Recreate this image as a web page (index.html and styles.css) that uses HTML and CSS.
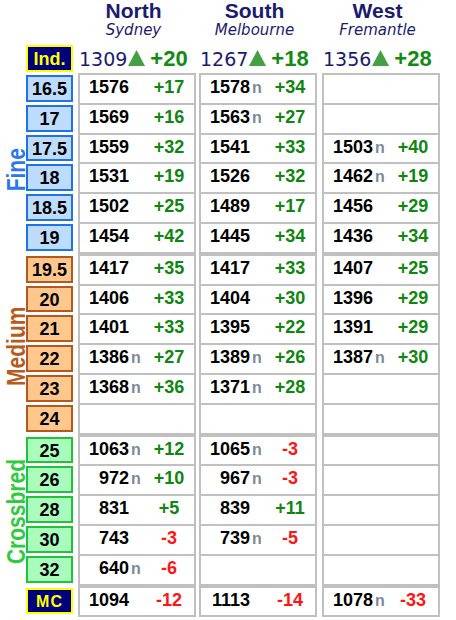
FILE: index.html
```html
<!DOCTYPE html>
<html>
<head>
<meta charset="utf-8">
<link rel="stylesheet" href="styles.css">
</head>
<body>
<div class="board">
  <div class="side">
    <div class="side-top"></div>
    <div class="lsec six fine-sec"><span class="lab fine">Fine</span></div>
    <div class="lsec six med-sec"><span class="lab medium">Medium</span></div>
    <div class="lsec five cross-sec"><span class="lab cross">Crossbred</span></div>
  </div>

  <div class="grades">
    <div class="g-head"></div>
    <div class="g-idx"><div class="gbox dark">Ind.</div></div>
    <div class="gsec">
      <div class="grow"><div class="gbox blue">16.5</div></div>
      <div class="grow"><div class="gbox blue">17</div></div>
      <div class="grow"><div class="gbox blue">17.5</div></div>
      <div class="grow"><div class="gbox blue">18</div></div>
      <div class="grow"><div class="gbox blue">18.5</div></div>
      <div class="grow"><div class="gbox blue">19</div></div>
    </div>
    <div class="gsec">
      <div class="grow"><div class="gbox orange">19.5</div></div>
      <div class="grow"><div class="gbox orange">20</div></div>
      <div class="grow"><div class="gbox orange">21</div></div>
      <div class="grow"><div class="gbox orange">22</div></div>
      <div class="grow"><div class="gbox orange">23</div></div>
      <div class="grow"><div class="gbox orange">24</div></div>
    </div>
    <div class="gsec">
      <div class="grow"><div class="gbox green">25</div></div>
      <div class="grow"><div class="gbox green">26</div></div>
      <div class="grow"><div class="gbox green">28</div></div>
      <div class="grow"><div class="gbox green">30</div></div>
      <div class="grow"><div class="gbox green">32</div></div>
    </div>
    <div class="gsec">
      <div class="grow"><div class="gbox dark mc">MC</div></div>
    </div>
  </div>

  <div class="col north">
    <div class="head"><div class="city">North</div><div class="sub">Sydney</div></div>
    <div class="idx"><span class="ival">1309</span><svg class="tri" width="17" height="16" viewBox="0 0 17 16"><polygon points="8.5,0 17,16 0,16" fill="#45a045"/></svg><span class="ichg">+20</span></div>
    <div class="sec">
      <div class="row"><span class="num">1576</span><span class="n"></span><span class="chg up">+17</span></div>
      <div class="row"><span class="num">1569</span><span class="n"></span><span class="chg up">+16</span></div>
      <div class="row"><span class="num">1559</span><span class="n"></span><span class="chg up">+32</span></div>
      <div class="row"><span class="num">1531</span><span class="n"></span><span class="chg up">+19</span></div>
      <div class="row"><span class="num">1502</span><span class="n"></span><span class="chg up">+25</span></div>
      <div class="row"><span class="num">1454</span><span class="n"></span><span class="chg up">+42</span></div>
    </div>
    <div class="sec">
      <div class="row"><span class="num">1417</span><span class="n"></span><span class="chg up">+35</span></div>
      <div class="row"><span class="num">1406</span><span class="n"></span><span class="chg up">+33</span></div>
      <div class="row"><span class="num">1401</span><span class="n"></span><span class="chg up">+33</span></div>
      <div class="row"><span class="num">1386</span><span class="n">n</span><span class="chg up">+27</span></div>
      <div class="row"><span class="num">1368</span><span class="n">n</span><span class="chg up">+36</span></div>
      <div class="row"></div>
    </div>
    <div class="sec">
      <div class="row"><span class="num">1063</span><span class="n">n</span><span class="chg up">+12</span></div>
      <div class="row"><span class="num">972</span><span class="n">n</span><span class="chg up">+10</span></div>
      <div class="row"><span class="num">831</span><span class="n"></span><span class="chg up">+5</span></div>
      <div class="row"><span class="num">743</span><span class="n"></span><span class="chg down">-3</span></div>
      <div class="row"><span class="num">640</span><span class="n">n</span><span class="chg down">-6</span></div>
    </div>
    <div class="sec">
      <div class="row"><span class="num">1094</span><span class="n"></span><span class="chg down">-12</span></div>
    </div>
  </div>

  <div class="col south">
    <div class="head"><div class="city">South</div><div class="sub">Melbourne</div></div>
    <div class="idx"><span class="ival">1267</span><svg class="tri" width="17" height="16" viewBox="0 0 17 16"><polygon points="8.5,0 17,16 0,16" fill="#45a045"/></svg><span class="ichg">+18</span></div>
    <div class="sec">
      <div class="row"><span class="num">1578</span><span class="n">n</span><span class="chg up">+34</span></div>
      <div class="row"><span class="num">1563</span><span class="n">n</span><span class="chg up">+27</span></div>
      <div class="row"><span class="num">1541</span><span class="n"></span><span class="chg up">+33</span></div>
      <div class="row"><span class="num">1526</span><span class="n"></span><span class="chg up">+32</span></div>
      <div class="row"><span class="num">1489</span><span class="n"></span><span class="chg up">+17</span></div>
      <div class="row"><span class="num">1445</span><span class="n"></span><span class="chg up">+34</span></div>
    </div>
    <div class="sec">
      <div class="row"><span class="num">1417</span><span class="n"></span><span class="chg up">+33</span></div>
      <div class="row"><span class="num">1404</span><span class="n"></span><span class="chg up">+30</span></div>
      <div class="row"><span class="num">1395</span><span class="n"></span><span class="chg up">+22</span></div>
      <div class="row"><span class="num">1389</span><span class="n">n</span><span class="chg up">+26</span></div>
      <div class="row"><span class="num">1371</span><span class="n">n</span><span class="chg up">+28</span></div>
      <div class="row"></div>
    </div>
    <div class="sec">
      <div class="row"><span class="num">1065</span><span class="n">n</span><span class="chg down">-3</span></div>
      <div class="row"><span class="num">967</span><span class="n">n</span><span class="chg down">-3</span></div>
      <div class="row"><span class="num">839</span><span class="n"></span><span class="chg up">+11</span></div>
      <div class="row"><span class="num">739</span><span class="n">n</span><span class="chg down">-5</span></div>
      <div class="row"></div>
    </div>
    <div class="sec">
      <div class="row"><span class="num">1113</span><span class="n"></span><span class="chg down">-14</span></div>
    </div>
  </div>

  <div class="col west">
    <div class="head"><div class="city">West</div><div class="sub">Fremantle</div></div>
    <div class="idx"><span class="ival">1356</span><svg class="tri" width="17" height="16" viewBox="0 0 17 16"><polygon points="8.5,0 17,16 0,16" fill="#45a045"/></svg><span class="ichg">+28</span></div>
    <div class="sec">
      <div class="row"></div>
      <div class="row"></div>
      <div class="row"><span class="num">1503</span><span class="n">n</span><span class="chg up">+40</span></div>
      <div class="row"><span class="num">1462</span><span class="n">n</span><span class="chg up">+19</span></div>
      <div class="row"><span class="num">1456</span><span class="n"></span><span class="chg up">+29</span></div>
      <div class="row"><span class="num">1436</span><span class="n"></span><span class="chg up">+34</span></div>
    </div>
    <div class="sec">
      <div class="row"><span class="num">1407</span><span class="n"></span><span class="chg up">+25</span></div>
      <div class="row"><span class="num">1396</span><span class="n"></span><span class="chg up">+29</span></div>
      <div class="row"><span class="num">1391</span><span class="n"></span><span class="chg up">+29</span></div>
      <div class="row"><span class="num">1387</span><span class="n">n</span><span class="chg up">+30</span></div>
      <div class="row"></div>
      <div class="row"></div>
    </div>
    <div class="sec">
      <div class="row"></div>
      <div class="row"></div>
      <div class="row"></div>
      <div class="row"></div>
      <div class="row"></div>
    </div>
    <div class="sec">
      <div class="row"><span class="num">1078</span><span class="n">n</span><span class="chg down">-33</span></div>
    </div>
  </div>
</div>
</body>
</html>
```

FILE: styles.css
```css
html, body {
  margin: 0;
  padding: 0;
  background: #ffffff;
}

body {
  font-family: "Liberation Sans", Arial, sans-serif;
  color: #000;
}

.board {
  display: flex;
  align-items: flex-start;
}

/* ---------- vertical section labels ---------- */
.side {
  width: 26px;
  flex: none;
}

.side-top {
  height: 73px;
}

.lsec {
  box-sizing: border-box;
  display: flex;
  align-items: center;
  justify-content: center;
}

.lsec.six { height: 180.8px; }
.lsec.five { height: 151px; }

.fine-sec { padding-top: 13px; }
.med-sec { padding-top: 4px; }
.cross-sec { padding-top: 3px; }

.lab {
  writing-mode: vertical-rl;
  transform: rotate(180deg) scaleY(0.84);
  font-weight: bold;
  font-size: 25px;
  line-height: 25px;
  white-space: nowrap;
  margin-left: 6px;
}

.lab.fine { color: #2a78ea; }
.lab.medium { color: #b85a1c; }
.lab.cross { color: #2ccc3c; }

/* ---------- grade boxes ---------- */
.grades {
  width: 47px;
  flex: none;
}

.g-head { height: 43px; }

.g-idx {
  height: 30px;
  padding-top: 2px;
  box-sizing: border-box;
}

.gsec {
  border-top: 2px solid transparent;
  border-bottom: 2px solid transparent;
}

.grow {
  height: 27.8px;
}

.grow + .grow {
  border-top: 2px solid transparent;
}

.gbox {
  box-sizing: border-box;
  height: 26.8px;
  border: 2px solid;
  padding-top: 2px;
  text-align: center;
  font-weight: bold;
  font-size: 18px;
  line-height: 20.8px;
  color: #000;
}

.gbox.blue {
  background: #bedcfe;
  border-color: #1f72ea;
}

.gbox.orange {
  background: #fec78e;
  border-color: #b6581c;
}

.gbox.green {
  background: #aafcbc;
  border-color: #22c23a;
}

.gbox.dark {
  background: #00007c;
  border-color: #ffff00;
  color: #ffff00;
}

.gbox.mc {
  font-size: 16px;
  letter-spacing: 1px;
  padding-top: 2px;
}

/* ---------- data columns ---------- */
.col {
  width: 118px;
  flex: none;
}

.north { margin-left: 5px; }
.south { margin-left: 3px; }
.west { margin-left: 5px; }

.head {
  height: 43px;
  padding-right: 7px;
  text-align: center;
  color: #1b1b70;
}

.city {
  font-weight: bold;
  font-size: 21px;
  line-height: 22px;
}

.sub {
  font-family: "DejaVu Sans", Verdana, sans-serif;
  font-style: italic;
  font-size: 15px;
  line-height: 16px;
}

.idx {
  box-sizing: border-box;
  height: 30px;
  padding-top: 1px;
  padding-left: 1px;
  line-height: 29px;
  font-size: 22px;
  white-space: nowrap;
}

.ival {
  font-family: "DejaVu Sans", Verdana, sans-serif;
  font-size: 19px;
  color: #1b1b72;
}

.tri {
  vertical-align: baseline;
  margin-left: 1px;
}

.ichg {
  margin-left: 5px;
  font-weight: bold;
  color: #138a13;
}

.sec {
  border: 2px solid #c0c0c0;
}

.row {
  height: 27.8px;
  line-height: 25px;
  display: grid;
  grid-template-columns: 49px 20px 40px;
  align-items: baseline;
  font-weight: bold;
  font-size: 18px;
}

.row + .row {
  border-top: 2px solid #c0c0c0;
}

.num {
  text-align: right;
  color: #000;
}

.n {
  padding-left: 2px;
  font-size: 16px;
  color: #7d8898;
}

.chg {
  text-align: center;
}

.chg.up { color: #0f860f; }
.chg.down { color: #ff1414; }
```
